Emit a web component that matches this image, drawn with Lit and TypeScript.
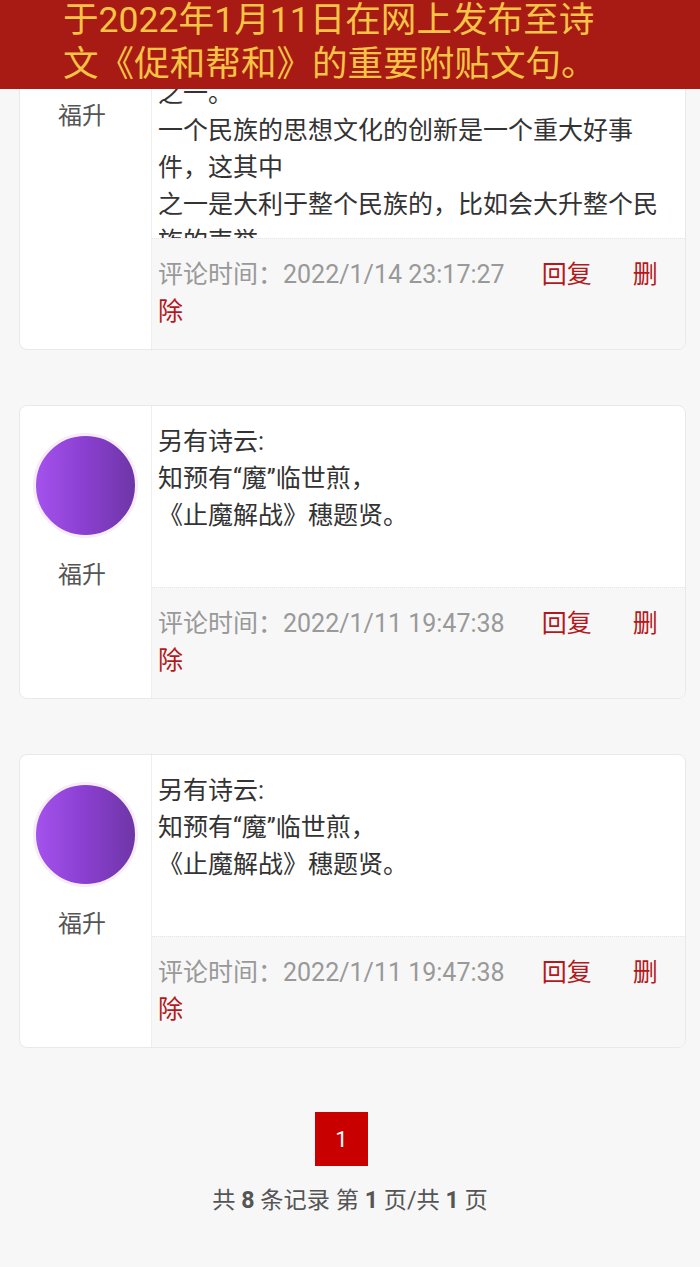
import { LitElement, html, css } from 'lit';
import { customElement } from 'lit/decorators.js';

const POEM = ['另有诗云:', '知预有“魔”临世煎，', '《止魔解战》穗题贤。'];

const COMMENTS = [
  {
    lines: ['', '', '', '之一。', '一个民族的思想文化的创新是一个重大好事件，这其中', '之一是大利于整个民族的，比如会大升整个民族的声誉'],
    time: '2022/1/14 23:17:27',
    tall: true,
  },
  { lines: POEM, time: '2022/1/11 19:47:38', tall: false },
  { lines: POEM, time: '2022/1/11 19:47:38', tall: false },
];

@customElement('app-root')
export class AppRoot extends LitElement {
  static styles = css`
    :host {
      display: block;
      position: relative;
      height: 1267px;
      overflow: hidden;
      background: #f7f7f7;
      font-family: Roboto, "Noto Sans CJK SC", sans-serif;
      font-size: 25px;
      line-height: 37px;
      color: #333;
    }

    .banner {
      position: absolute;
      top: 0;
      left: 0;
      right: 0;
      height: 89px;
      overflow: hidden;
      background: #a81a14;
      color: #f6c344;
      font-size: 35.6px;
      line-height: 44px;
      padding: 0 76px 0 63px;
      box-sizing: border-box;
    }

    .banner p {
      margin: -2px 0 0;
    }

    .list {
      display: flex;
      flex-direction: column;
      gap: 55px;
      margin: -54px 14px 0 19px;
    }

    .card {
      display: flex;
      background: #fff;
      border: 1px solid #e9e9e9;
      border-radius: 8px;
      overflow: hidden;
    }

    .side {
      flex: none;
      width: 132px;
      border-right: 1px solid #eee;
      display: flex;
      flex-direction: column;
      align-items: center;
      padding-top: 27px;
      box-sizing: border-box;
    }

    .avatar {
      width: 99px;
      height: 99px;
      border-radius: 50%;
      border: 3px solid #f6edf6;
      background: linear-gradient(90deg, #a452ec 0%, #8a3fd0 50%, #6e36a6 100%);
    }

    .name {
      margin: 19px 7px 0 0;
      font-size: 24px;
      color: #555;
    }

    .main {
      flex: 1;
      min-width: 0;
      display: flex;
      flex-direction: column;
    }

    .text {
      height: 181px;
      padding: 17px 20px 0 6px;
      overflow: hidden;
      box-sizing: border-box;
      color: #333;
    }

    .text.tall {
      height: 291px;
    }

    .meta {
      height: 111px;
      padding: 17px 20px 0 6px;
      box-sizing: border-box;
      background: #f7f7f7;
      border-top: 1px dotted #e6e6e6;
      color: #999;
    }

    .meta a {
      color: #b3191c;
      margin-left: 37px;
    }

    .meta a + a {
      margin-left: 41px;
    }

    .pager {
      display: flex;
      flex-direction: column;
      align-items: center;
      margin-top: 64px;
      color: #555;
    }

    .page-num {
      width: 53px;
      height: 54px;
      margin-right: 17px;
      display: flex;
      align-items: center;
      justify-content: center;
      background: #c90000;
      color: #fff;
      font-size: 22px;
    }

    .summary {
      margin-top: 16px;
      font-size: 23.2px;
    }

    .summary b {
      font-weight: 700;
    }
  `;

  render() {
    return html`
      <div class="list">
        ${COMMENTS.map(c => html`
          <div class="card">
            <div class="side">
              <div class="avatar"></div>
              <div class="name">福升</div>
            </div>
            <div class="main">
              <div class="text ${c.tall ? 'tall' : ''}">
                ${c.lines.map(line => html`<div>${line || html`<br>`}</div>`)}
              </div>
              <div class="meta">评论时间：${c.time}<a>回复</a><a>删除</a></div>
            </div>
          </div>
        `)}
      </div>
      <div class="pager">
        <div class="page-num">1</div>
        <div class="summary">共 <b>8</b> 条记录 第 <b>1</b> 页/共 <b>1</b> 页</div>
      </div>
      <div class="banner">
        <p>于2022年1月11日在网上发布至诗文《促和帮和》的重要附贴文句。</p>
      </div>
    `;
  }
}
